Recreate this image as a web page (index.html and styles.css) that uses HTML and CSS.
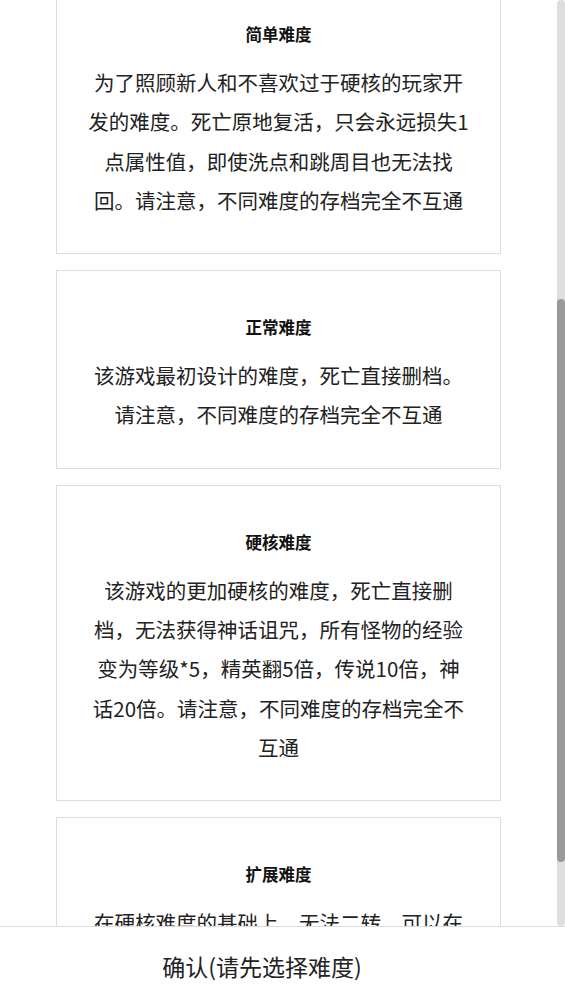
FILE: index.html
```html
<!DOCTYPE html>
<html lang="zh-CN">
<head>
    <meta charset="UTF-8">
    <meta name="viewport" content="width=device-width, initial-scale=1.0">
    <title>选择难度</title>
    <link rel="stylesheet" href="styles.css">
</head>
<body>

    <div class="main">
        <div class="level-list" id="levelList">
            <div class="intro">
                <div class="intro-title">选择难度</div>
                <div class="intro-text">不同难度的存档完全不互通，请谨慎选择</div>
            </div>

            <div class="level-card" id="firstCard">
                <div class="level-name">简单难度</div>
                <div class="level-desc">为了照顾新人和不喜欢过于硬核的玩家开发的难度。死亡原地复活，只会永远损失1点属性值，即使洗点和跳周目也无法找回。请注意，不同难度的存档完全不互通</div>
            </div>

            <div class="level-card">
                <div class="level-name">正常难度</div>
                <div class="level-desc">该游戏最初设计的难度，死亡直接删档。请注意，不同难度的存档完全不互通</div>
            </div>

            <div class="level-card">
                <div class="level-name">硬核难度</div>
                <div class="level-desc">该游戏的更加硬核的难度，死亡直接删档，无法获得神话诅咒，所有怪物的经验变为等级*5，精英翻5倍，传说10倍，神话20倍。请注意，不同难度的存档完全不互通</div>
            </div>

            <div class="level-card">
                <div class="level-name">扩展难度</div>
                <div class="level-desc">在硬核难度的基础上，无法二转，可以在扩展地图中挑战全新的首领</div>
            </div>
        </div>

        <!-- scroll indicator -->
        <div class="scroll-rail">
            <div class="scroll-thumb" id="scrollThumb"></div>
        </div>
    </div>

    <div class="confirm-bar">
        <div class="confirm-btn">确认(请先选择难度)</div>
    </div>

    <script>
        const list = document.getElementById('levelList');
        const thumb = document.getElementById('scrollThumb');
        const firstCard = document.getElementById('firstCard');

        // Keep the thumb in step with the list
        function updateThumb() {
            const ratio = list.clientHeight / list.scrollHeight;
            thumb.style.height = (list.clientHeight * ratio) + 'px';
            thumb.style.marginTop = (list.scrollTop * ratio) + 'px';
        }

        list.addEventListener('scroll', updateThumb);

        // Start with the first card just under the top edge
        list.scrollTop = firstCard.offsetTop - list.offsetTop + 23;
        updateThumb();
    </script>
</body>
</html>
```

FILE: styles.css
```css
body {
    display: flex;
    flex-direction: column;
    height: 100vh;
    margin: 0;
    background-color: #fff;
    color: #222;
    font-family: "Noto Sans CJK SC", "Noto Sans", sans-serif;
    overflow: hidden;
}

.main {
    flex: 1;
    display: flex;
    min-height: 0;
}

/* Scrolling list of difficulties */
.level-list {
    flex: 1;
    overflow-y: auto;
    scrollbar-width: none;
    display: flex;
    flex-direction: column;
    align-items: center;
}

.level-list::-webkit-scrollbar {
    display: none;
}

.scroll-rail {
    width: 8px;
    background-color: #dedede;
    border-radius: 4px;
}

.scroll-thumb {
    background-color: #9a9a9a;
    border-radius: 4px;
}

.intro {
    flex-shrink: 0;
    height: 470px;
    display: flex;
    flex-direction: column;
    justify-content: center;
    align-items: center;
    gap: 12px;
}

.intro-title {
    font-size: 24px;
    font-weight: bold;
}

.intro-text {
    font-size: 16px;
    color: #666;
}

.level-card {
    flex-shrink: 0;
    box-sizing: border-box;
    width: 80%;
    margin-bottom: 16px;
    padding: 44px 31px 33px;
    border: 1px solid #dcdcdc;
    background-color: #fff;
    text-align: center;
}

.level-name {
    font-size: 16.5px;
    font-weight: bold;
    line-height: 24px;
    margin-bottom: 17px;
    color: #111;
}

.level-desc {
    font-size: 20.5px;
    line-height: 39.3px;
}

/* Bottom confirm bar */
.confirm-bar {
    flex-shrink: 0;
    height: 78px;
    box-sizing: border-box;
    padding-right: 41px;
    border-top: 1px solid #dcdcdc;
    display: flex;
    justify-content: center;
    align-items: center;
    background-color: #fff;
}

.confirm-btn {
    font-size: 23px;
    color: #222;
}
```
